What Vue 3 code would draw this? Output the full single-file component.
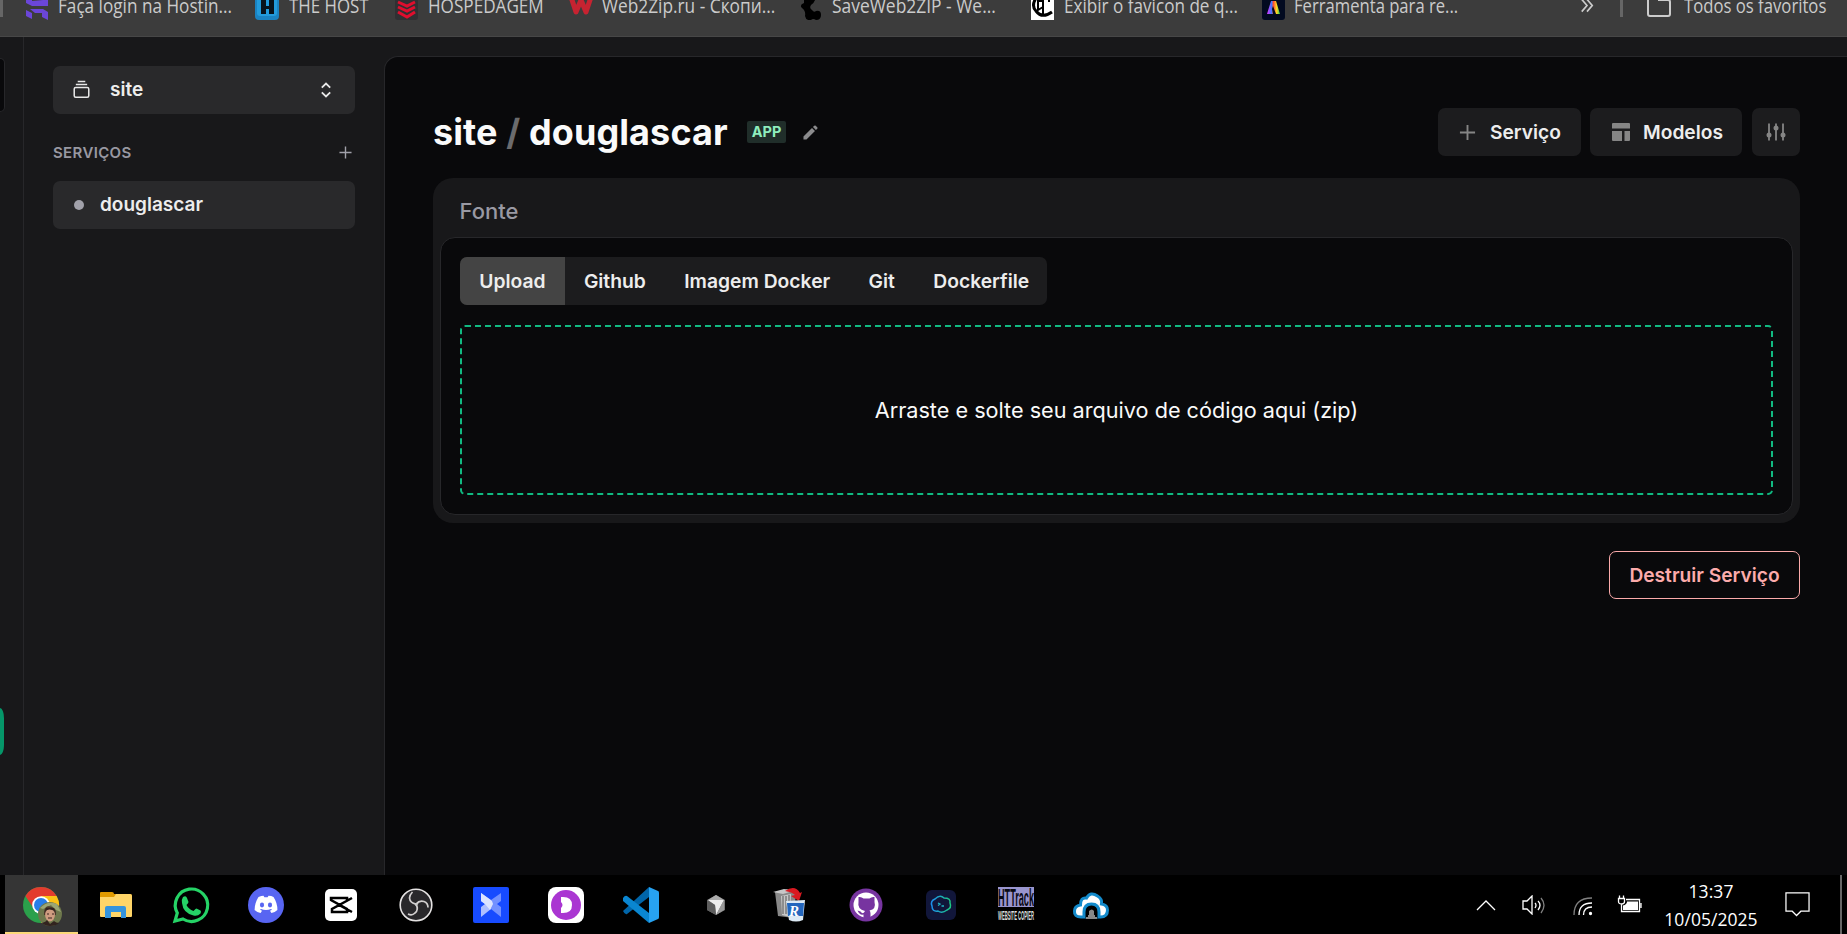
<script setup>
import { ref } from 'vue'

const tabs = ['Upload', 'Github', 'Imagem Docker', 'Git', 'Dockerfile']
const activeTab = ref('Upload')
</script>

<template>
  <div class="screen">
    <header class="bookmarks">
      <span class="edge"></span>
      <nav class="bookmark-list">
        <a class="bookmark">
          <svg viewBox="0 0 24 24"><path fill="#6b46d9" d="M0 0h6v5l11-1V0h5v10H6L0 7zM0 14l6 3v6l-6-3zM4 13h13l5 3v8l-6-3v-4H9z" /></svg>
          <span class="t1">Faça login na Hostin...</span>
        </a>
        <a class="bookmark">
          <svg viewBox="0 0 24 24"><rect width="24" height="24" rx="4" fill="#1a83c2" /><rect x="2" y="0" width="20" height="20" rx="3" fill="#229bdc" /><path fill="#07131c" d="M6 4h5v6h3V4h5v14h-5v-5h-3v5H6z" /></svg>
          <span class="t2">THE HOST</span>
        </a>
        <a class="bookmark">
          <svg viewBox="0 0 24 24"><rect width="23" height="24" rx="3" fill="#303033" /><path fill="none" stroke="#df0e2e" stroke-width="3" d="M3 6l9 4 8-4M3 11l9 4 8-4M3 16l9 5 8-5" /></svg>
          <span class="t3">HOSPEDAGEM</span>
        </a>
        <a class="bookmark">
          <svg viewBox="0 0 24 24"><path fill="none" stroke="#c62331" stroke-width="5" stroke-linejoin="round" d="M2 1l5 15 5-12 5 12 5-15" /></svg>
          <span class="t4">Web2Zip.ru - Скопи...</span>
        </a>
        <a class="bookmark">
          <svg viewBox="0 0 24 24"><path d="M4 0h12q-1 7-5 9-2 3 1 5 2 3 4 1 5-1 5 4t-5 5q-3-2-5 0-5 1-6-4 1-5-3-8-3-3 2-5z" /></svg>
          <span class="t5">SaveWeb2ZIP - We...</span>
        </a>
        <a class="bookmark">
          <svg viewBox="0 0 24 24"><path fill="#fff" d="M0 0h23v24H0z" /><path fill="none" stroke="#000" stroke-width="3" d="M5 2q-5 8 0 13 6 8 16 1" /><path fill="none" stroke="#000" stroke-width="2" d="M7 1v13l5-3M12 0v20M12 3h6v3M6 5h5" /></svg>
          <span class="t6">Exibir o favicon de q...</span>
        </a>
        <a class="bookmark">
          <svg viewBox="0 0 24 24"><defs><linearGradient id="rainbow"><stop stop-color="#e630ff" /><stop offset=".35" stop-color="#4378ff" /><stop offset=".5" stop-color="#ff5134" /><stop offset=".75" stop-color="#ffdc21" /><stop offset="1" stop-color="#23c858" /></linearGradient></defs><rect width="23" height="24" rx="3" fill="#020a20" /><path fill="url(#rainbow)" d="M5 18L9 5h5l4 13h-4l-3-8-1 3 1 5z" /></svg>
          <span class="t7">Ferramenta para re...</span>
        </a>
      </nav>
      <svg class="more" viewBox="0 0 16 16"><path d="M2 1l6 7-6 7M8 1l6 7-6 7" /></svg>
      <span class="divider"></span>
      <svg class="all-icon" viewBox="0 0 24 24"><path d="M1 0v20q0 2 2 2h18q2 0 2-2V8q0-2-2-2h-9V0" /></svg>
      <span class="all-text">Todos os favoritos</span>
    </header>

    <main class="workspace">
      <aside class="rail"><span class="rail-item"></span><span class="rail-action"></span></aside>
      <aside class="sidebar">
        <button class="row select">
          <svg class="stack" viewBox="0 0 18 20"><path d="M5 1.5h8M3 4.8h12" /><rect x="1.3" y="8" width="15.4" height="10.3" rx="1.6" /></svg>
          <span>site</span>
          <svg class="updown" viewBox="0 0 12 16"><path d="M1.8 5.6L6 1.5l4.2 4.1M1.8 10.4L6 14.5l4.2-4.1" /></svg>
        </button>
        <div class="section"><span>SERVIÇOS</span><svg viewBox="0 0 14 14"><path d="M7 .5v13M.5 7h13" /></svg></div>
        <a class="row service"><i></i><span>douglascar</span></a>
      </aside>

      <section class="content">
        <div class="heading">
          <h1>site <em>/</em> douglascar</h1>
          <span class="badge">APP</span>
          <svg class="pencil" viewBox="0 0 16 16"><path d="M.5 12.3L9.6 3.2l3.2 3.2-9.1 9.1H.5zM10.6 2.2l1.4-1.4q.8-.7 1.6 0l1.6 1.6q.7.8 0 1.6l-1.4 1.4z" /></svg>
          <div class="actions">
            <button class="btn add"><svg viewBox="0 0 18 18"><path d="M9 1v16M1 9h16" /></svg><span>Serviço</span></button>
            <button class="btn models"><svg viewBox="0 0 18 18"><path d="M1 0h16q1 0 1 1v4.5H0V1q0-1 1-1zM0 8h10v10H1q-1 0-1-1zM12.5 8H18v9q0 1-1 1h-4.5z" /></svg><span>Modelos</span></button>
            <button class="btn tune"><svg viewBox="0 0 20 20"><path d="M3 1.5v17M10 1.5v17M17 1.5v17" /><circle cx="3" cy="13" r="2.5" /><circle cx="10" cy="6" r="2.5" /><circle cx="17" cy="13" r="2.5" /></svg></button>
          </div>
        </div>
        <div class="card">
          <h2>Fonte</h2>
          <div class="card-body">
            <div class="tabs"><button v-for="tab in tabs" :key="tab" :class="{ active: tab === activeTab }" @click="activeTab = tab">{{ tab }}</button></div>
            <div class="drop">Arraste e solte seu arquivo de código aqui (zip)</div>
          </div>
        </div>
        <button class="destroy">Destruir Serviço</button>
      </section>
    </main>

    <footer class="taskbar">
      <div class="apps">
        <div class="app current">
          <svg viewBox="0 0 36 36">
            <circle cx="18" cy="18" r="18" fill="#2ba04b" /><path fill="#e33b2e" d="M2.4 9A18 18 0 0 1 33.6 9L33.6 10H18L11 22z" /><path fill="#fbc116" d="M33.6 9A18 18 0 0 1 18 36L26 22 18 9z" />
            <circle cx="18" cy="18" r="8.8" fill="#fff" /><circle cx="18" cy="18" r="7" fill="#287ee9" />
            <g transform="translate(27 27)"><circle r="12" fill="#6d774c" /><path fill="#9ba574" d="M-10-6q8-8 17-4l4 8-5-2-5-5-8 4z" /><path fill="#4a382b" d="M-6-2q1-8 8-5 5 2 4 8H-6z" /><ellipse cy="1" rx="4.9" ry="6.5" fill="#d09c80" /><path fill="#32231f" d="M-5-3q4-3 10 0l-1-3h-8zM-8 9q4-1 5-3l3 4 4-3q2 2 5 2-3 3-9 3-5 0-8-3z" /><path stroke="#3c2520" d="M-3 0h2M2 0h2M-2 4h4" /></g>
          </svg>
        </div>
        <div class="app"><svg viewBox="0 0 36 36"><path fill="#e19a00" d="M2 6q0-1 1-1h11q2 0 2 2h16q2 0 2 2v5H2z" /><path fill="#ffd568" d="M2 10h14l2-3h14q2 0 2 2v20q0 1-1 1H3q-1 0-1-1z" /><path fill="#3594dd" d="M7 31V21q0-2 2-2h17q2 0 2 2v10h-5v-6H13v6z" /></svg></div>
        <div class="app"><svg viewBox="0 0 36 36"><path fill="none" stroke="#25d366" stroke-width="3.2" d="M2 34l2.3-8A16.2 16.2 0 1 1 10 32z" /><path fill="#25d366" d="M10 10q3-2 4 1l1.5 4q0 1-2 3 2 4 7 6l2-2q1-1 2 0l3 1.5q1 1 0 3-3 3-7 2Q10 26 9 16q-.5-4 1-6z" /></svg></div>
        <div class="app"><svg viewBox="0 0 36 36"><circle cx="18" cy="18" r="18" fill="#5865f2" /><path fill="#fff" d="M10.500 10q3-1.200 5-1.200l.9 1.400h3.200l.9-1.400q3 0 5 1.200 4 6 3.900 13-2.500 2.500-6 3l-1.400-2.200 2-1-1-.8q-5 2-10 0l-1 .8 2 1-1.400 2.200q-3.500-.5-6-3Q6.600 16 10.500 10z" /><ellipse cx="14" cy="18" rx="2.1" ry="2.400" fill="#5865f2" /><ellipse cx="22" cy="18" rx="2.100" ry="2.400" fill="#5865f2" /></svg></div>
        <div class="app"><svg viewBox="0 0 36 36"><rect x="2" y="2" width="32" height="32" rx="5" fill="#fff" /><path fill="none" stroke="#000" stroke-width="2.5" d="M29 11L9 22v3h15v-3L8 13v-2h16v3M29 25L16 18" /></svg></div>
        <div class="app"><svg viewBox="0 0 36 36"><circle cx="18" cy="18" r="15.800" fill="#29282b" stroke="#e5e3e3" stroke-width="1.600" /><path fill="none" stroke="#d3d0d0" stroke-width="1.700" d="M18 17q-6-1-6.500-6 0-3 3-6M18 17q3.500-4 8-2.500 4 1.500 4 6M18 17q3 6-1 9-3 3-7 1" /><path fill="#ccc" d="M15.500 16l5 0-2 4z" /></svg></div>
        <div class="app"><svg viewBox="0 0 36 36"><rect width="36" height="36" rx="2" fill="#174bff" /><path fill="#aebfff" d="M8 6l10 7v9L8 30V20l4-3-4-3z" /><path fill="#7391ff" d="M28 6l-10 7v9l10 8V20l-4-3 4-3z" /><path fill="#dce4ff" d="M8 6l11 8 1 3-3 6-5-6-4-3z" /></svg></div>
        <div class="app"><svg viewBox="0 0 36 36"><rect width="36" height="36" rx="8" fill="#fff" /><circle cx="18" cy="18" r="15" fill="#aa36d2" /><path fill="#fff" d="M13 10q11-1 11 8t-11 8v-5q3-3 0-6z" /></svg></div>
        <div class="app"><svg viewBox="0 0 36 36"><path fill="#0065a9" d="M0 24L26 0v10L4 27q-2 1-4-3z" /><path fill="#0a86d1" d="M0 11q2-3 4-2l22 17v10L0 14z" /><path fill="#27a2f1" d="M26 0l9 4q1 0 1 2v24q0 2-1 2l-9 4z" /></svg></div>
        <div class="app"><svg viewBox="0 0 36 36"><path fill="#777" d="M9 13l9-5 9 5v10l-9 5-9-5z" /><path fill="#eee" d="M10 13h16l-8 15-1-10z" /><path fill="#5d5d5d" d="M9 13l8 5 1 10-9-5z" /><path fill="#aaa" d="M18 8l8 5H10z" /><path fill="#999" d="M26 13v10l-8 5z" /></svg></div>
        <div class="app"><svg viewBox="0 0 36 36"><path fill="#888" d="M2 5l12-3 9 3-2 26-16-2z" /><path fill="#c7c7c7" d="M0 5l11-3 9 2-10 3zM8 9l10-2-1 23-8-2z" /><path stroke="#555" d="M10 9v18M13 9v18M16 8v20" /><path fill="#d91921" d="M12 4q10-7 15 2l2-1-3 9-8-5 4-1q-3-3-10-4z" /><path fill="#dceaf5" d="M13 14l19-1-2 20q-7 3-14 0z" /><path fill="#2366bd" d="M14 16h17l-1 13H15z" /><text x="16" y="29" class="revo">R</text></svg></div>
        <div class="app"><svg viewBox="0 0 36 36"><circle cx="18" cy="18" r="16.500" fill="#7734a0" /><circle cx="18" cy="18" r="12.500" fill="#fff" /><path fill="#7734a0" d="M10.500 10q3-.5 5 1.500h6q2-2 5-1.500v5q2 7-5 8.500 1 1 1 3V32h-7v-4.500q-4 1-6-4l3 1q2 3 3.500 1l1-1.500q-8-2-6.500-9z" /></svg></div>
        <div class="app"><svg viewBox="0 0 36 36"><defs><linearGradient id="termius"><stop stop-color="#1d8fee" /><stop offset="1" stop-color="#1cc982" /></linearGradient></defs><rect x="3" y="3" width="30" height="30" rx="6" fill="#11163a" /><path fill="none" stroke="url(#termius)" stroke-width="1.500" d="M12 12q5-5 9-1 7 0 6 5 2 5-3 7-5 4-9 1-6 1-6-5-2-5 3-7z" /><path fill="none" stroke="#20b7c6" stroke-width="1.300" d="M15 16l2 1-2 1.500M18.500 19h2.500" /></svg></div>
        <div class="app"><svg viewBox="0 0 36 36"><path fill="#9995ce" d="M0 0h36v20H0z" /><text x="0" y="19" textLength="36" lengthAdjust="spacingAndGlyphs" class="httrack">HTTrack</text><text x="0" y="33" textLength="36" lengthAdjust="spacingAndGlyphs" class="copier">WEBSITE COPIER</text></svg></div>
        <div class="app"><svg viewBox="0 0 36 36"><path fill="#fff" stroke="#138acb" stroke-width="3" d="M8 30q-7 0-6.500-6 0-5 6-6 0-8 6-7 4-7 11-2 5 3 4 8 6 1 6 6 0 7-7 7z" /><path fill="#000" stroke="#138acb" stroke-width="3" d="M11 31v-6q0-8 7.500-8t7.500 8v6" /><path fill="#888" d="M13 32v-2h2v-2h1v-4q3-3 5 0v4h1v2h2v2z" /></svg></div>
      </div>
      <div class="tray">
        <svg class="chevron" viewBox="0 0 20 12"><path d="M1 11l9-9 9 9" /></svg>
        <svg class="sound" viewBox="0 0 24 20"><path d="M1 6h4l5-5v18l-5-5H1zM13 8q2 2 0 5M16 6q4 4 0 9" /><path opacity=".5" d="M19 3q6 7 0 15" /></svg>
        <svg class="wifi" viewBox="0 0 20 20"><path opacity=".5" d="M1 19Q1 2 19 2" /><path d="M6 19Q6 7 19 7M10.500 19q0-8 8.500-8" /><circle cx="17.500" cy="17.500" r="1" /></svg>
        <svg class="battery" viewBox="0 0 25 18"><path d="M9 4.500h13.500v12H4.500V12M24 8v5M2.500.5v3M6.500.5v3M1.500 3.500h6v3q0 2.500-3 2.500t-3-2.500zM4.500 9v4" /><path class="charge" d="M10 6.500h11v8.500H6v-4.500q4-1 4-4z" /></svg>
        <div class="clock"><span>13:37</span><span>10/05/2025</span></div>
        <svg class="notice" viewBox="0 0 26 26"><path d="M1 1h24v19h-8.500L12 24.500 7.500 20H1z" /></svg>
        <span class="desktop-edge"></span>
      </div>
    </footer>
  </div>
</template>

<style>
body { margin: 0; background: #000; }
</style>

<style scoped>
* { box-sizing: border-box; }
svg { display: block; flex: none; }
button { border: 0; padding: 0; margin: 0; font: inherit; color: inherit; background: none; }
.screen { width: 1847px; height: 934px; display: flex; flex-direction: column; overflow: hidden; font-family: Inter, "Liberation Sans", sans-serif; color: #ededed; background: #18181a; }
.bookmarks { height: 37px; flex: none; display: flex; align-items: flex-start; background: #3c3c3c; border-bottom: 1px solid #474747; font: 19.5px/26px "Open Sans", "Noto Sans", sans-serif; color: #cbcbcb; overflow: hidden; white-space: nowrap; }
.bookmarks > * { flex: none; }
.edge { width: 3px; height: 17px; background: #666; margin-right: 23px; }
.bookmark-list { display: grid; grid-template-columns: 229px 140px 174px 231px 231px 231px 318px; margin-top: -4px; }
.bookmark { display: flex; height: 24px; }
.bookmark svg { width: 24px; height: 24px; margin-right: 8px; }
.bookmark span { flex: none; margin-top: -3px; transform-origin: left; transform: scaleX(.88); }
.bookmark .t2 { margin-left: 2px; transform: scaleX(.865); }
.bookmark .t3 { margin-left: 1px; transform: scaleX(.878); }
.bookmark .t4 { margin-left: 1px; transform: scaleX(.887); }
.bookmark .t5 { transform: scaleX(.894); }
.bookmark .t6 { margin-left: 1px; transform: scaleX(.878); }
.bookmark .t7 { transform: scaleX(.853); }
.more { width: 14px; height: 15px; fill: none; stroke: #ccc; stroke-width: 1.9; margin-top: -2px; }
.divider { width: 3px; height: 17px; background: #666; margin: 0 24px 0 26px; }
.all-icon { width: 24px; height: 24px; margin-top: -6px; fill: none; stroke: #ccc; stroke-width: 2; }
.all-text { margin: -7px 0 0 13px; transform-origin: left; transform: scaleX(.856); }
.workspace { flex: 1; min-height: 0; display: flex; }
.rail { width: 24px; border-right: 1px solid #27272a; padding-top: 21px; }
.rail-item, .rail-action { display: block; }
.rail-item { width: 5px; height: 54px; border: 1px solid #27272a; border-left: 0; border-radius: 0 9px 9px 0; background: #09090b; }
.rail-action { width: 4px; height: 47px; margin-top: 596px; border-radius: 0 4px 4px 0 / 0 10px 10px 0; background: #059669; }
.sidebar { width: 360px; padding: 29px 29px 0; }
.row { display: flex; align-items: center; width: 302px; height: 48px; border-radius: 7px; background: #29292b; font-size: 19px; font-weight: 600; }
.row span { margin-top: -1px; }
.select { padding: 0 23px 0 20px; }
.select span { margin-left: 20px; }
.stack { width: 17px; height: 19px; margin-top: -1px; fill: none; stroke: #e8e8e8; stroke-width: 1.6; }
.updown { width: 12px; height: 16px; margin-left: auto; margin-top: -1px; fill: none; stroke: #e8e8e8; stroke-width: 1.8; }
.section { display: flex; align-items: center; justify-content: space-between; height: 20px; margin: 28px 0 19px; padding-right: 3px; color: #9898a2; font-size: 15px; font-weight: 600; letter-spacing: .35px; }
.section svg { width: 13px; height: 13px; fill: none; stroke: #a1a1aa; stroke-width: 1.5; }
.service { padding-left: 21px; }
.service i { width: 10px; height: 10px; border-radius: 50%; background: #a1a1aa; margin-right: 16px; }
.content { flex: 1; margin-top: 19px; border: 1px solid #27272a; border-right: 0; border-bottom: 0; border-radius: 14px 0 0 0; background: #09090b; padding: 51px 47px 0 48px; }
.heading { display: flex; align-items: center; height: 48px; }
h1 { margin: 0; width: 295px; font-size: 36px; line-height: 48px; font-weight: 700; color: #fafafa; letter-spacing: .1px; white-space: nowrap; }
h1 em { font-style: normal; color: #6b6b6d; }
.badge { margin-left: 19px; width: 39px; height: 22px; background: #202e2a; color: #8eedbd; border-radius: 2px; font-size: 14.5px; line-height: 22px; font-weight: 700; text-align: center; }
.pencil { width: 15px; height: 15px; margin: 1px 0 0 17px; fill: #8b8b8d; }
.actions { margin-left: auto; display: flex; gap: 9px; font-size: 19.2px; font-weight: 600; }
.btn { height: 48px; display: flex; align-items: center; justify-content: center; border-radius: 7px; background: #1c1c1e; }
.btn svg { fill: #858585; stroke: #858585; }
.add { width: 143px; gap: 14px; }
.add svg { width: 17px; height: 17px; stroke-width: 2; margin-left: 1px; }
.models { width: 152px; gap: 13px; }
.models svg { width: 18px; height: 18px; stroke: none; margin-left: 3px; }
.tune { width: 48px; margin-left: 1px; }
.tune svg { width: 20px; height: 20px; stroke-width: 1.8; }
.tune circle { stroke: none; }
.card { margin-top: 22px; height: 345px; border-radius: 20px; background: #18181a; padding: 0 7px; }
h2 { margin: 0; height: 59px; padding: 4px 0 0 19.5px; font-size: 22px; line-height: 59px; font-weight: 500; color: #9999a3; }
.card-body { height: 278px; border: 1px solid #27272a; border-radius: 15px; background: #09090b; padding: 19px; }
.tabs { display: flex; width: 587px; height: 48px; border-radius: 7px; overflow: hidden; background: #1c1c1e; font-size: 19.3px; font-weight: 600; }
.tabs button { padding: 0 19.2px; white-space: nowrap; }
.tabs .active { background: #444; }
.drop { height: 170px; margin-top: 20px; border: 2px dashed #10b981; border-radius: 5px; display: flex; align-items: center; justify-content: center; color: #fafafa; font-size: 21.65px; }
.destroy { display: block; width: 191px; height: 48px; margin: 28px 0 0 auto; border: 1px solid #fcabab; border-radius: 7px; color: #fcabab; font-size: 19.2px; font-weight: 600; }
.taskbar { height: 59px; flex: none; display: flex; justify-content: space-between; background: #000; }
.apps { display: flex; padding-left: 5px; gap: 2px; }
.app { width: 73px; height: 59px; display: grid; place-items: center; padding-right: 2px; }
.app svg { width: 36px; height: 36px; overflow: visible; }
.current { background: #353535; border-bottom: 2px solid #fcd879; padding-top: 2px; }
.revo { font: italic bold 15px "Liberation Serif", serif; fill: #fff; }
.httrack { font: bold 23px "Liberation Sans", sans-serif; fill: #090914; }
.copier { font: bold 13px "Liberation Sans", sans-serif; fill: #ddd; }
.tray { display: flex; align-items: center; }
.tray > svg { fill: none; stroke: #fff; stroke-width: 1.3; }
.chevron { width: 20px; height: 12px; margin-right: 26px; }
.sound { width: 24px; height: 20px; margin-right: 27px; }
.wifi { width: 20px; height: 20px; margin-right: 24px; margin-top: 3px; }
.wifi circle { fill: #fff; }
.battery { width: 25px; height: 18px; margin-top: -1px; margin-right: 22px; }
.battery .charge { fill: #fff; stroke: none; }
.clock { width: 94px; margin-right: 27px; text-align: center; color: #fff; font: 17.5px/28px "Open Sans", "Noto Sans", sans-serif; letter-spacing: .05px; }
.clock span { display: block; }
.notice { width: 25px; height: 25px; margin-right: 30px; }
.desktop-edge { width: 2px; height: 59px; background: #666; margin-right: 5px; }
</style>
